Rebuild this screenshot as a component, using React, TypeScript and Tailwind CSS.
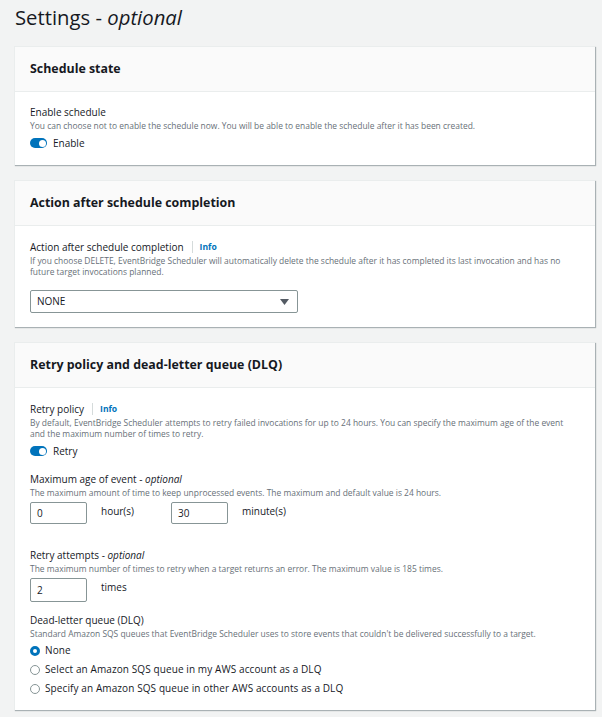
const font = { fontFamily: '"Open Sans", "Noto Sans", sans-serif' };

const Card = ({ title, children }: { title: string; children: React.ReactNode }) => {
  return (
    <section className="bg-white border-t border-l border-[#eaeded] shadow-[1px_1px_1px_rgba(0,28,36,0.3)]">
      <div className="h-[45px] bg-[#fafafa] border-b border-[#eaeded] px-[15px] flex items-center">
        <h2 className="text-[12.4px] font-bold text-[#16191f]">{title}</h2>
      </div>
      {children}
    </section>
  );
};

const Label = ({ text, optional, info }: { text: string; optional?: boolean; info?: boolean }) => (
  <div className="flex items-center text-[10px] leading-[14px] text-[#16191f]">
    <span>
      {text}
      {optional && (
        <>
          {" - "}
          <i>optional</i>
        </>
      )}
    </span>
    {info && (
      <>
        <span className="ml-[8px] mr-[7px] w-px h-[12px] bg-[#d5dbdb]" />
        <span className="text-[8.6px] font-bold text-[#0073bb]">Info</span>
      </>
    )}
  </div>
);

const Desc = ({ children }: { children: React.ReactNode }) => (
  <p className="text-[8.45px] leading-[11px] text-[#687078]">{children}</p>
);

const Toggle = ({ label }: { label: string }) => (
  <div className="flex items-center h-[14px] text-[10px] text-[#16191f]">
    <span className="relative w-[17px] h-[10px] rounded-full bg-[#0073bb]">
      <span className="absolute right-[1.5px] top-[1.5px] w-[7px] h-[7px] rounded-full bg-white" />
    </span>
    <span className="ml-[6px]">{label}</span>
  </div>
);

const Box = ({ value, h = 22 }: { value: string; h?: number }) => (
  <div
    className={`w-[57px] border border-[#879596] rounded-[2px] flex items-center px-[6px] text-[10px] text-[#16191f] ${
      h === 24 ? "h-[24px]" : "h-[22px]"
    }`}
  >
    {value}
  </div>
);

const Radio = ({ label, checked }: { label: string; checked?: boolean }) => (
  <div className="flex items-center h-[19px] text-[10px] text-[#16191f]">
    {checked ? (
      <span className="w-[10px] h-[10px] rounded-full border-[3px] border-[#0073bb] bg-white" />
    ) : (
      <span className="w-[10px] h-[10px] rounded-full border border-[#879596] bg-white" />
    )}
    <span className="ml-[5px] tracking-[0.1px]">{label}</span>
  </div>
);

export default function App() {
  return (
    <div className="min-h-[717px] bg-[#f2f3f3] pl-[14px] pr-[7px]" style={font}>
      <h1 className="pl-[1px] h-[46px] pt-[3px] text-[20.3px] leading-[28px] text-[#16191f]">
        Settings - <i>optional</i>
      </h1>
      <div className="flex flex-col gap-[15px]">
        <Card title="Schedule state">
          <div className="px-[15px] pt-[13px] pb-[15px]">
            <Label text="Enable schedule" />
            <div className="mt-[1px]">
              <Desc>
                You can choose not to enable the schedule now. You will be able to enable the schedule after it has been
                created.
              </Desc>
            </div>
            <div className="mt-[5px]">
              <Toggle label="Enable" />
            </div>
          </div>
        </Card>

        <Card title="Action after schedule completion">
          <div className="px-[15px] pt-[14px] pb-[14px]">
            <Label text="Action after schedule completion" info />
            <div className="mt-[1px]">
              <Desc>
                If you choose DELETE, EventBridge Scheduler will automatically delete the schedule after it has
                completed its last invocation and has no future target invocations planned.
              </Desc>
            </div>
            <div className="mt-[13px] w-[268px] h-[23px] border border-[#879596] rounded-[2px] flex items-center justify-between pl-[6px] pr-[8px] text-[10px] text-[#16191f]">
              <span>NONE</span>
              <svg width="9" height="6" viewBox="0 0 9 6">
                <path d="M0 0 H9 L4.5 6 Z" fill="#545b64" />
              </svg>
            </div>
          </div>
        </Card>

        <Card title="Retry policy and dead-letter queue (DLQ)">
          <div className="px-[15px] pt-[14px] pb-[12px]">
            <Label text="Retry policy" info />
            <div className="mt-[1px]">
              <Desc>
                By default, EventBridge Scheduler attempts to retry failed invocations for up to 24 hours. You can
                specify the maximum age of the event and the maximum number of times to retry.
              </Desc>
            </div>
            <div className="mt-[5px]">
              <Toggle label="Retry" />
            </div>

            <div className="mt-[14px]">
              <Label text="Maximum age of event" optional />
            </div>
            <div className="mt-[1px]">
              <Desc>The maximum amount of time to keep unprocessed events. The maximum and default value is 24 hours.</Desc>
            </div>
            <div className="mt-[4px] flex items-start">
              <Box value="0" />
              <span className="ml-[14px] w-[70px] text-[10px] leading-[18px] text-[#16191f]">hour(s)</span>
              <Box value="30" />
              <span className="ml-[14px] text-[10px] leading-[18px] text-[#16191f]">minute(s)</span>
            </div>

            <div className="mt-[24px]">
              <Label text="Retry attempts" optional />
            </div>
            <div className="mt-[1px]">
              <Desc>The maximum number of times to retry when a target returns an error. The maximum value is 185 times.</Desc>
            </div>
            <div className="mt-[4px] flex items-start">
              <Box value="2" h={24} />
              <span className="ml-[14px] text-[10px] leading-[18px] text-[#16191f]">times</span>
            </div>

            <div className="mt-[11px]">
              <Label text="Dead-letter queue (DLQ)" />
            </div>
            <div className="mt-[1px]">
              <Desc>
                Standard Amazon SQS queues that EventBridge Scheduler uses to store events that couldn't be delivered
                successfully to a target.
              </Desc>
            </div>
            <div className="mt-[2px] flex flex-col">
              <Radio label="None" checked />
              <Radio label="Select an Amazon SQS queue in my AWS account as a DLQ" />
              <Radio label="Specify an Amazon SQS queue in other AWS accounts as a DLQ" />
            </div>
          </div>
        </Card>
      </div>
    </div>
  );
}
